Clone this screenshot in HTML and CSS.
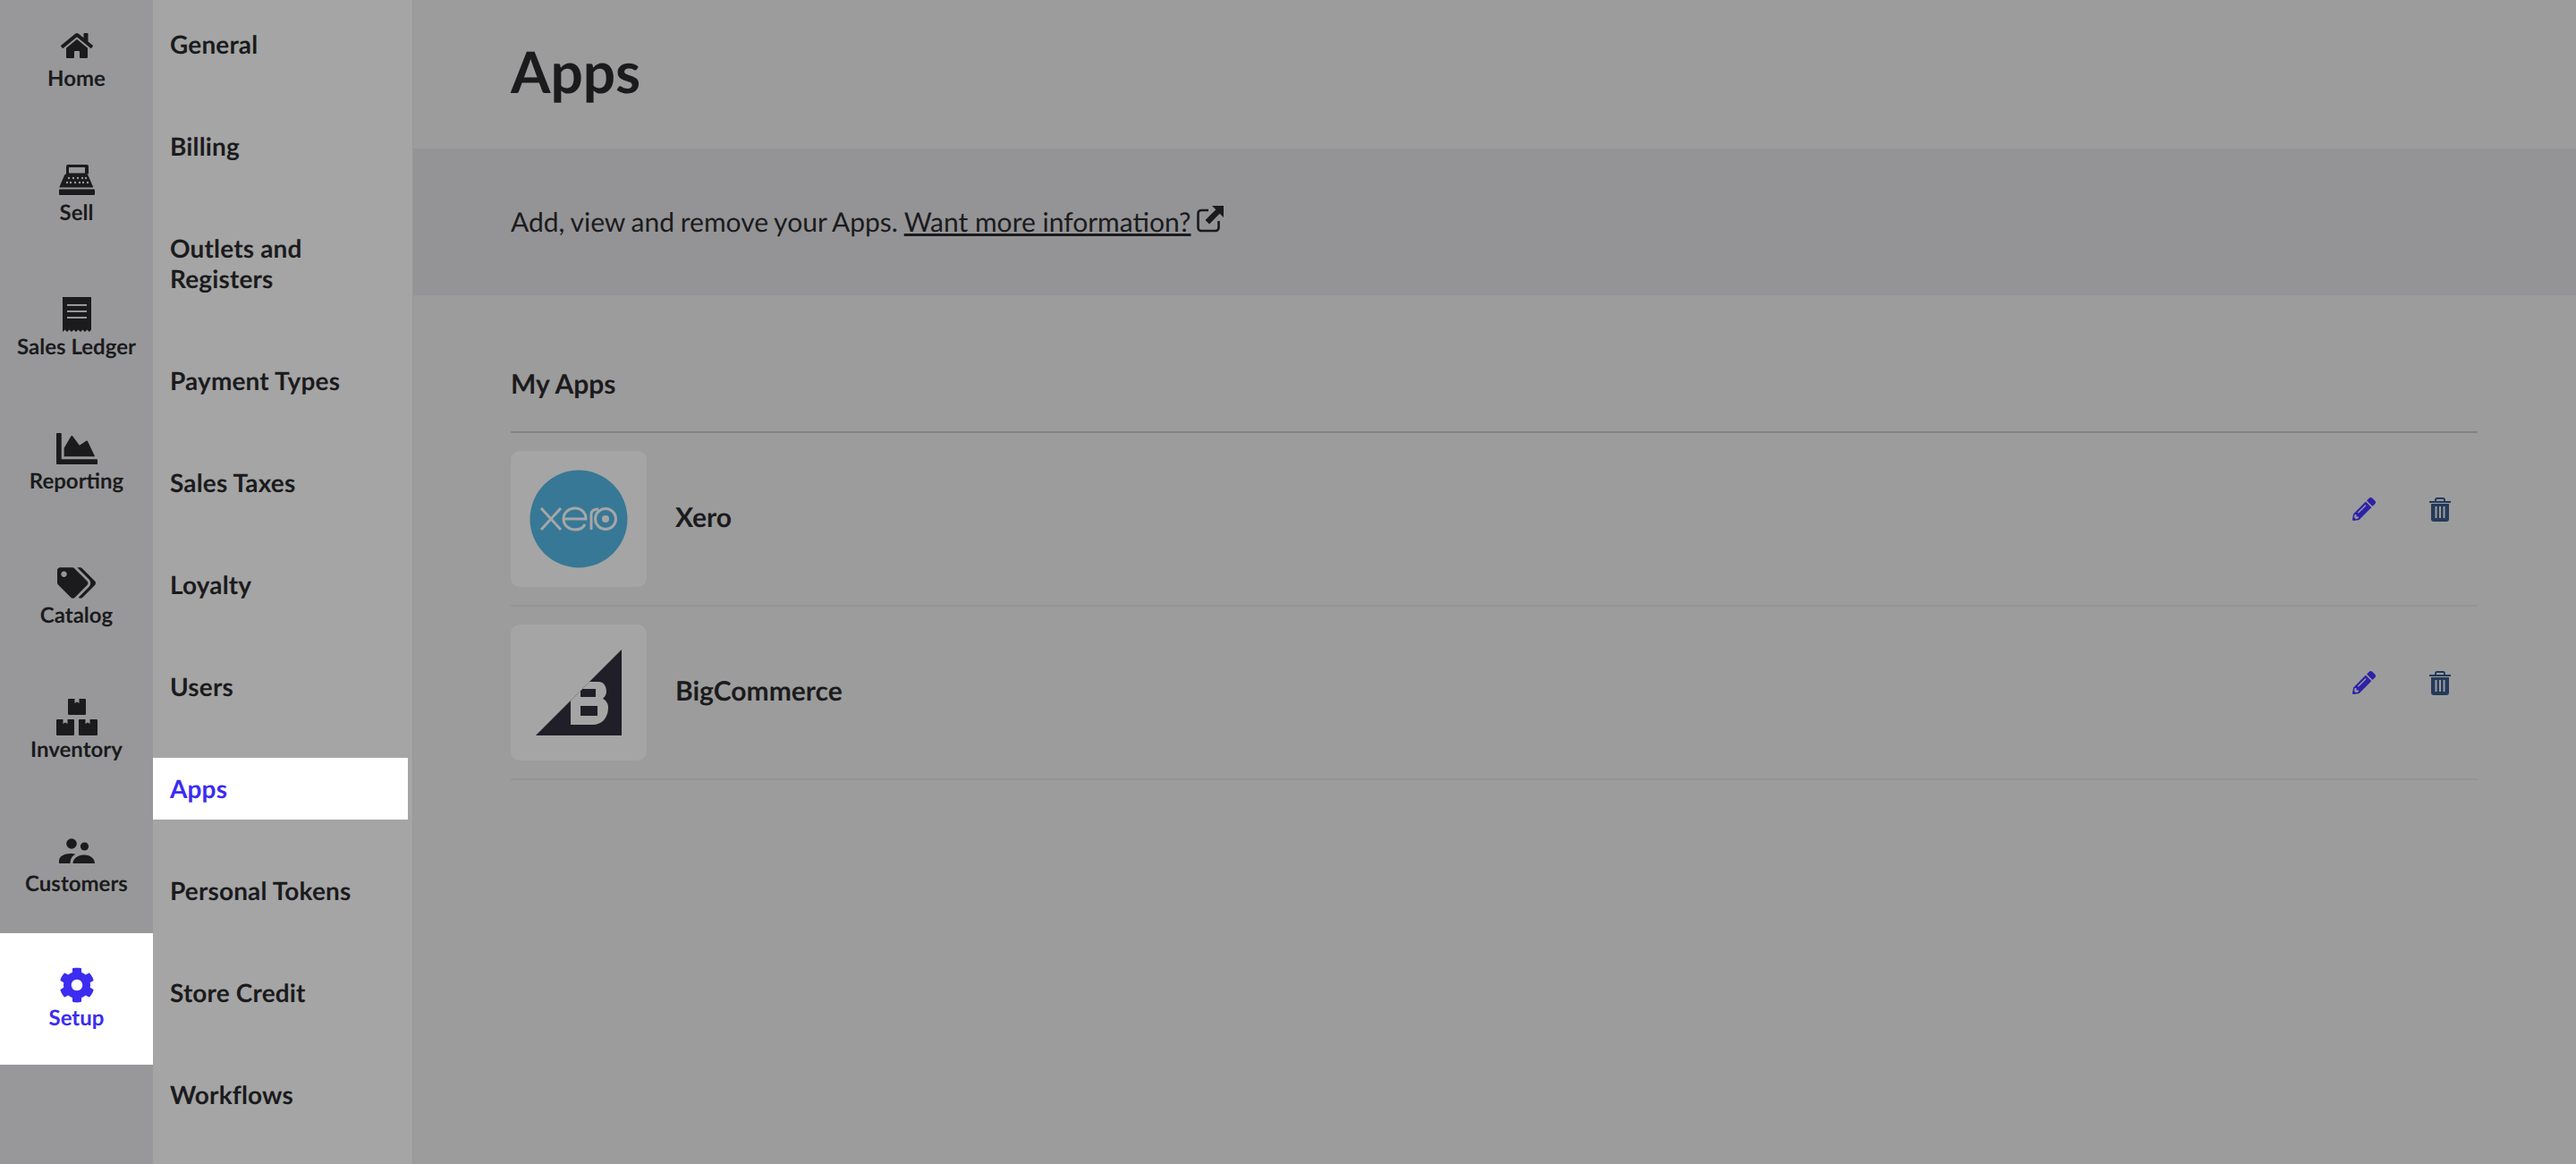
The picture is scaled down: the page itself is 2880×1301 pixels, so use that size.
FILE: index.html
```html
<!DOCTYPE html>
<html lang="en">
<head>
    <meta charset="UTF-8">
    <meta name="viewport" content="width=device-width, initial-scale=1.0">
    <title>Apps</title>
    <link rel="stylesheet" href="styles.css">
</head>
<body>

<div class="layout">
    <nav class="rail">
        <a class="rail-item" href="#">
            <span class="rail-icon"><svg width="36" height="32" viewBox="0 0 576 512"><path d="M280.37 148.26L96 300.11V464a16 16 0 0 0 16 16l112.06-.29a16 16 0 0 0 15.92-16V368a16 16 0 0 1 16-16h64a16 16 0 0 1 16 16v95.64a16 16 0 0 0 16 16.05L464 480a16 16 0 0 0 16-16V300L295.67 148.26a12.19 12.19 0 0 0-15.3 0zM571.6 251.47L488 182.56V44.05a12 12 0 0 0-12-12h-56a12 12 0 0 0-12 12v72.61L318.47 43a48 48 0 0 0-61 0L4.34 251.47a12 12 0 0 0-1.6 16.9l25.5 31A12 12 0 0 0 45.15 301l235.22-193.74a12.19 12.19 0 0 1 15.3 0L530.9 301a12 12 0 0 0 16.9-1.6l25.5-31a12 12 0 0 0-1.7-16.93z"/></svg></span>
            <span>Home</span>
        </a>
        <a class="rail-item" href="#">
            <span class="rail-icon"><svg width="40" height="34" viewBox="0 0 40 34"><path fill-rule="evenodd" d="M9 0h22a2 2 0 0 1 2 2v8.500h-2.500a2 2 0 0 1 2 1.500l5 11.500a3 3 0 0 1 .5 2H.5a3 3 0 0 1 .5-2l5-11.500a2 2 0 0 1 2-1.500V2a2 2 0 0 1 2-2zM11 3v6.500h18V3zM1 27.500h38a1 1 0 0 1 1 1V33a1 1 0 0 1-1 1H1a1 1 0 0 1-1-1v-4.500a1 1 0 0 1 1-1z"/><g fill="#98989a"><circle cx="11" cy="15" r="1.200"/><circle cx="16" cy="15" r="1.200"/><circle cx="21" cy="15" r="1.200"/><circle cx="26" cy="15" r="1.200"/><circle cx="30" cy="15" r="1.200"/><circle cx="9" cy="20" r="1.200"/><circle cx="13" cy="20" r="1.200"/><circle cx="18" cy="20" r="1.200"/><circle cx="23" cy="20" r="1.200"/><circle cx="27" cy="20" r="1.200"/><circle cx="32" cy="20" r="1.200"/></g></svg></span>
            <span>Sell</span>
        </a>
        <a class="rail-item" href="#">
            <span class="rail-icon"><svg width="32" height="39" viewBox="0 0 32 39"><path d="M0 0h32v36.500l-2 2.500-2.500-2.500L25 39l-2.500-2.500L20 39l-2.500-2.500L15 39l-2.500-2.500L10 39l-2.500-2.500L5 39l-2.500-2.500L0 39z"/><g fill="#98989a"><rect x="5" y="8" width="22" height="2"/><rect x="5" y="15" width="22" height="2"/><rect x="5" y="22" width="22" height="2"/></g></svg></span>
            <span>Sales Ledger</span>
        </a>
        <a class="rail-item" href="#">
            <span class="rail-icon"><svg width="46" height="35" viewBox="0 64 512 384" preserveAspectRatio="none"><path d="M500 384c6.600 0 12 5.400 12 12v40c0 6.600-5.400 12-12 12H12c-6.600 0-12-5.400-12-12V76c0-6.600 5.400-12 12-12h40c6.600 0 12 5.400 12 12v308h436zM372.700 159.500L288 216l-85.300-113.700c-5.100-6.800-15.500-6.300-19.900 1L96 248v104h384l-89.900-187.800c-3.200-6.500-11.400-8.700-17.400-4.700z"/></svg></span>
            <span>Reporting</span>
        </a>
        <a class="rail-item" href="#">
            <span class="rail-icon"><svg width="43" height="35" viewBox="0 0 640 512"><path d="M497.941 225.941L286.059 14.059A48 48 0 0 0 252.118 0H48C21.490 0 0 21.490 0 48v204.118a48 48 0 0 0 14.059 33.941l211.882 211.882c18.744 18.745 49.136 18.746 67.882 0l204.118-204.118c18.745-18.745 18.745-49.137 0-67.882zM112 160c-26.510 0-48-21.490-48-48s21.490-48 48-48 48 21.490 48 48-21.490 48-48 48zm513.941 133.823L421.823 497.941c-18.745 18.745-49.137 18.745-67.882 0l-.36-.36L527.640 323.522c16.999-16.999 26.360-39.600 26.360-63.640s-9.362-46.641-26.360-63.640L331.397 0h48.721a48 48 0 0 1 33.941 14.059l211.882 211.882c18.745 18.745 18.745 49.137 0 67.882z"/></svg></span>
            <span>Catalog</span>
        </a>
        <a class="rail-item" href="#">
            <span class="rail-icon"><svg width="46" height="41" viewBox="0 0 46 41"><path d="M13 1a1 1 0 0 1 1-1h6.500v5L23 3.500 25.500 5V0H32a1 1 0 0 1 1 1v16a1 1 0 0 1-1 1H14a1 1 0 0 1-1-1zM0 24a1 1 0 0 1 1-1h6.500v5l2.500-1.500 2.500 1.500v-5H19a1 1 0 0 1 1 1v16a1 1 0 0 1-1 1H1a1 1 0 0 1-1-1zM25 24a1 1 0 0 1 1-1h6.500v5l2.500-1.500 2.500 1.500v-5H45a1 1 0 0 1 1 1v16a1 1 0 0 1-1 1H26a1 1 0 0 1-1-1z"/></svg></span>
            <span>Inventory</span>
        </a>
        <a class="rail-item" href="#">
            <span class="rail-icon"><svg width="40" height="28" viewBox="0 0 40 28"><circle cx="14" cy="6" r="5.800"/><circle cx="28.500" cy="9" r="4.600"/><path d="M0 28v-3c0-5 6-8 13-8 2 0 4 .3 5.500.8C15 19.500 13 22 12.500 28zM15.500 28c0-5 5-9.500 12.500-9.500S40 23 40 28z"/></svg></span>
            <span>Customers</span>
        </a>
        <a class="rail-item active" href="#">
            <span class="rail-icon"><svg width="40" height="40" viewBox="0 0 512 512"><path d="M487.400 315.700l-42.600-24.600c4.300-23.200 4.300-47 0-70.200l42.600-24.600c4.900-2.800 7.100-8.600 5.500-14-11.100-35.600-30-67.800-54.700-94.600-3.800-4.100-10-5.100-14.800-2.300L380.800 110c-17.900-15.400-38.500-27.300-60.800-35.100V25.800c0-5.600-3.900-10.500-9.400-11.700-36.700-8.200-74.300-7.800-109.200 0-5.500 1.200-9.400 6.100-9.400 11.700V75c-22.200 7.900-42.800 19.800-60.800 35.100L88.700 85.500c-4.900-2.800-11-1.900-14.800 2.300-24.700 26.700-43.600 58.900-54.700 94.600-1.700 5.400.6 11.200 5.500 14L67.300 221c-4.300 23.200-4.300 47 0 70.200l-42.600 24.600c-4.900 2.800-7.100 8.600-5.500 14 11.100 35.600 30 67.800 54.700 94.600 3.800 4.100 10 5.100 14.800 2.300l42.600-24.600c17.900 15.400 38.500 27.300 60.800 35.100v49.200c0 5.600 3.900 10.500 9.400 11.700 36.700 8.200 74.300 7.800 109.200 0 5.500-1.200 9.400-6.100 9.400-11.700v-49.200c22.200-7.900 42.800-19.800 60.800-35.100l42.600 24.600c4.900 2.800 11 1.900 14.800-2.300 24.700-26.700 43.600-58.900 54.700-94.600 1.500-5.500-.7-11.300-5.600-14.100zM256 336c-44.100 0-80-35.900-80-80s35.900-80 80-80 80 35.900 80 80-35.900 80-80 80z"/></svg></span>
            <span>Setup</span>
        </a>
    </nav>

    <aside class="submenu">
        <a href="#">General</a>
        <a href="#">Billing</a>
        <a href="#">Outlets and Registers</a>
        <a href="#">Payment Types</a>
        <a href="#">Sales Taxes</a>
        <a href="#">Loyalty</a>
        <a href="#">Users</a>
        <a class="active" href="#">Apps</a>
        <a href="#">Personal Tokens</a>
        <a href="#">Store Credit</a>
        <a href="#">Workflows</a>
    </aside>

    <main class="main">
        <header class="page-header">
            <h1>Apps</h1>
        </header>
        <div class="info-band">
            <p>Add, view and remove your Apps. <a href="#">Want more information?</a>
                <svg class="ext-icon" width="30" height="30" viewBox="0 0 30 30"><path d="M13 5H5a3.500 3.500 0 0 0-3.500 3.500v16A3.500 3.500 0 0 0 5 28h16a3.500 3.500 0 0 0 3.500-3.500V17" fill="none" stroke="#1b1b1d" stroke-width="2.600"/><path d="M17 0h13v13l-4.300-4.300L14 20.500 9.500 16 21.300 4.300z" fill="#1b1b1d"/></svg>
            </p>
        </div>
        <section class="apps">
            <h2>My Apps</h2>
            <div class="app-list">
                <div class="app-row">
                    <div class="app-thumb">
                        <svg width="110" height="110" viewBox="0 0 110 110">
                            <circle cx="55" cy="55" r="54.500" fill="#377896"/>
                            <g fill="none" stroke="#a6a6a6" stroke-width="3">
                                <path d="M13 43l22 24M35 43L13 67"/>
                                <path d="M38 55h25c0-7-5-12-12-12s-13 5-13 12 6 12 13 12c5 0 9-2 11-6"/>
                                <path d="M69 67V50c0-4 3-6 8-6"/>
                                <circle cx="85" cy="55" r="11.500"/>
                            </g>
                            <circle cx="85" cy="55" r="4" fill="#a6a6a6"/>
                        </svg>
                    </div>
                    <span class="app-name">Xero</span>
                    <div class="app-actions">
                        <svg class="edit-icon" width="26" height="26" viewBox="0 0 512 512"><path d="M497.900 142.100l-46.100 46.100c-4.700 4.700-12.300 4.700-17 0l-111-111c-4.700-4.700-4.700-12.300 0-17l46.100-46.100c18.700-18.700 49.100-18.700 67.900 0l60.100 60.100c18.800 18.700 18.800 49.100 0 67.900zM284.200 99.800L21.600 362.400.4 483.900c-2.900 16.400 11.400 30.600 27.800 27.800l121.500-21.300 262.600-262.600c4.700-4.700 4.700-12.300 0-17l-111-111c-4.800-4.700-12.400-4.700-17.100 0zM124.100 339.900c-5.500-5.500-5.500-14.300 0-19.800l154-154c5.500-5.500 14.300-5.500 19.800 0s5.500 14.300 0 19.800l-154 154c-5.500 5.500-14.300 5.500-19.800 0zM88 424h48v36.300l-64.500 11.300-31.100-31.100L51.700 376H88v48z"/></svg>
                        <svg class="trash-icon" width="24" height="27" viewBox="0 0 24 27"><path d="M2 7h20v17a3 3 0 0 1-3 3H5a3 3 0 0 1-3-3z"/><rect y="4" width="24" height="2"/><path d="M7 5V3a2 2 0 0 1 2-2h6a2 2 0 0 1 2 2v2" fill="none" stroke="#243a5a" stroke-width="2"/><g fill="#9c9c9c"><rect x="6.500" y="10" width="2" height="13"/><rect x="11" y="10" width="2" height="13"/><rect x="15.500" y="10" width="2" height="13"/></g></svg>
                    </div>
                </div>
                <div class="app-row">
                    <div class="app-thumb">
                        <svg width="96" height="96" viewBox="0 0 96 96">
                            <path fill="#201f28" d="M96 0v96H0z"/>
                            <path fill="#a5a5a5" fill-rule="evenodd" d="M39 57l21-21h10c8 0 9 8 9 11s-2 6-4 8c4 2 6 6 6 10 0 11-7 19-17 19H39zM50 44v9h17v-9zM50 63v11h19V63z"/>
                        </svg>
                    </div>
                    <span class="app-name">BigCommerce</span>
                    <div class="app-actions">
                        <svg class="edit-icon" width="26" height="26" viewBox="0 0 512 512"><path d="M497.900 142.100l-46.100 46.100c-4.700 4.700-12.300 4.700-17 0l-111-111c-4.700-4.700-4.700-12.300 0-17l46.100-46.100c18.700-18.700 49.100-18.700 67.900 0l60.100 60.100c18.800 18.700 18.800 49.100 0 67.900zM284.200 99.800L21.600 362.400.4 483.900c-2.900 16.400 11.400 30.600 27.800 27.800l121.500-21.300 262.600-262.600c4.700-4.700 4.700-12.300 0-17l-111-111c-4.800-4.700-12.400-4.700-17.100 0zM124.100 339.900c-5.500-5.500-5.500-14.300 0-19.800l154-154c5.500-5.500 14.300-5.500 19.800 0s5.500 14.300 0 19.800l-154 154c-5.500 5.500-14.300 5.500-19.800 0zM88 424h48v36.300l-64.500 11.300-31.100-31.100L51.700 376H88v48z"/></svg>
                        <svg class="trash-icon" width="24" height="27" viewBox="0 0 24 27"><path d="M2 7h20v17a3 3 0 0 1-3 3H5a3 3 0 0 1-3-3z"/><rect y="4" width="24" height="2"/><path d="M7 5V3a2 2 0 0 1 2-2h6a2 2 0 0 1 2 2v2" fill="none" stroke="#243a5a" stroke-width="2"/><g fill="#9c9c9c"><rect x="6.500" y="10" width="2" height="13"/><rect x="11" y="10" width="2" height="13"/><rect x="15.500" y="10" width="2" height="13"/></g></svg>
                    </div>
                </div>
            </div>
        </section>
    </main>
</div>

</body>
</html>
```

FILE: styles.css
```css
* {
    box-sizing: border-box;
}

html, body {
    height: 100%;
}

body {
    margin: 0;
    font-family: 'Lato', sans-serif;
    color: #1b1b1d;
    background-color: #9c9c9c;
    overflow: hidden;
    text-rendering: geometricPrecision;
}

a {
    color: inherit;
    text-decoration: none;
}

.layout {
    display: flex;
    height: 100vh;
}

/* Icon rail */
.rail {
    flex: 0 0 170px;
    display: flex;
    flex-direction: column;
    gap: 3px;
    margin-top: -7px;
    background-color: #98989a;
}

.rail-item {
    display: flex;
    flex-direction: column;
    align-items: center;
    gap: 2px;
    height: 147px;
    padding-top: 38px;
    font-size: 24px;
    line-height: 30px;
    font-weight: 700;
    fill: #1b1b1d;
}

.rail-icon {
    display: flex;
    align-items: center;
    justify-content: center;
    height: 40px;
}

.rail-item.active {
    width: 171px;
    background-color: #fff;
    color: #3b2cf0;
    fill: #3b2cf0;
}

/* Second level menu */
.submenu {
    flex: 0 0 291px;
    display: flex;
    flex-direction: column;
    gap: 45px;
    padding: 15px 5px 0 0;
    background-color: #a5a5a5;
    border-right: 1px solid #979797;
}

.submenu a {
    padding: 16.5px 19px 18.5px;
    font-size: 28px;
    line-height: 34px;
    font-weight: 700;
    letter-spacing: 0.15px;
}

.submenu a.active {
    background-color: #fff;
    color: #3b2cf0;
}

/* Main content */
.main {
    flex: 1;
}

.page-header {
    height: 166px;
    padding: 0 109px 8px;
    display: flex;
    align-items: center;
}

h1 {
    margin: 0;
    font-size: 64px;
    font-weight: 700;
}

.info-band {
    height: 164px;
    padding: 0 109px;
    display: flex;
    align-items: center;
    background-color: #949496;
}

.info-band p {
    margin: 0;
    font-size: 30px;
    word-spacing: -0.9px;
}

.info-band a {
    text-decoration: underline;
    word-spacing: 0;
}

.ext-icon {
    vertical-align: -1px;
}

.apps {
    padding: 0 110px 0 109px;
}

h2 {
    margin: 0;
    height: 154px;
    display: flex;
    align-items: flex-end;
    padding-bottom: 35px;
    font-size: 30px;
    font-weight: 700;
    border-bottom: 2px solid #848484;
}

.app-row {
    display: flex;
    align-items: center;
    padding: 20px 0;
    border-bottom: 2px solid #939393;
}

.app-thumb {
    flex: 0 0 152px;
    height: 152px;
    display: flex;
    align-items: center;
    justify-content: center;
    margin-right: 32px;
    background-color: #a5a5a5;
    border-radius: 10px;
}

.app-name {
    flex: 1;
    padding-bottom: 4px;
    font-size: 30px;
    font-weight: 700;
}

.app-actions {
    display: flex;
    align-items: center;
    gap: 60px;
    padding-right: 30px;
    margin-bottom: 22px;
}

.edit-icon {
    fill: #2d22a8;
}

.trash-icon {
    fill: #243a5a;
}
```
